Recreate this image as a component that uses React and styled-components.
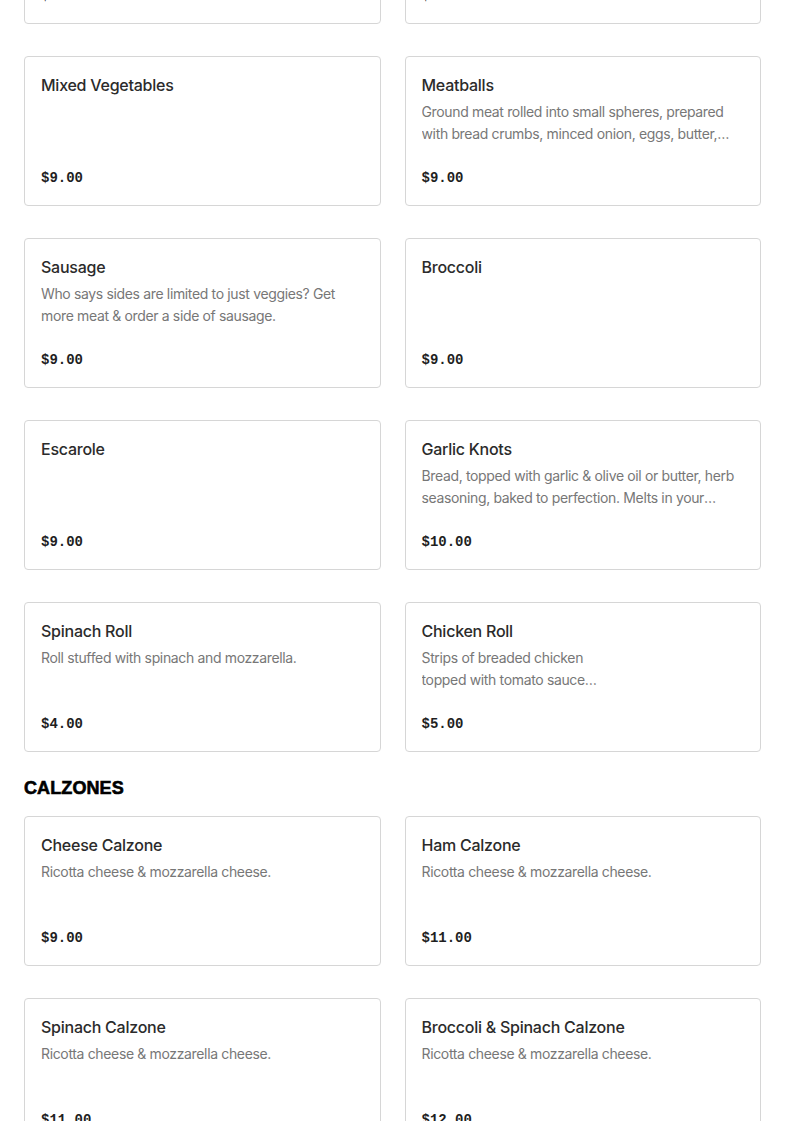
import styled, { createGlobalStyle } from "styled-components";

const GlobalStyle = createGlobalStyle`
	body {
		margin: 0;
		background: #ffffff;
		font-family: Inter, "Liberation Sans", sans-serif;
		color: #2d2d2d;
	}
`;

const sections = [
	{
		title: null,
		items: [
			{ name: "French Fries", desc: "", price: "$9.00" },
			{ name: "Onion Rings", desc: "", price: "$9.00" },
			{ name: "Mixed Vegetables", desc: "", price: "$9.00" },
			{
				name: "Meatballs",
				desc: "Ground meat rolled into small spheres, prepared with bread crumbs, minced onion, eggs, butter, and seasoning.",
				price: "$9.00",
			},
			{
				name: "Sausage",
				desc: "Who says sides are limited to just veggies? Get more meat & order a side of sausage.",
				price: "$9.00",
			},
			{ name: "Broccoli", desc: "", price: "$9.00" },
			{ name: "Escarole", desc: "", price: "$9.00" },
			{
				name: "Garlic Knots",
				desc: "Bread, topped with garlic & olive oil or butter, herb seasoning, baked to perfection. Melts in your mouth.",
				price: "$10.00",
			},
			{
				name: "Spinach Roll",
				desc: "Roll stuffed with spinach and mozzarella.",
				price: "$4.00",
			},
			{
				name: "Chicken Roll",
				desc: "Strips of breaded chicken\ntopped with tomato sauce\nand mozzarella.",
				price: "$5.00",
			},
		],
	},
	{
		title: "CALZONES",
		items: [
			{ name: "Cheese Calzone", desc: "Ricotta cheese & mozzarella cheese.", price: "$9.00" },
			{ name: "Ham Calzone", desc: "Ricotta cheese & mozzarella cheese.", price: "$11.00" },
			{ name: "Spinach Calzone", desc: "Ricotta cheese & mozzarella cheese.", price: "$11.00" },
			{
				name: "Broccoli & Spinach Calzone",
				desc: "Ricotta cheese & mozzarella cheese.",
				price: "$12.00",
			},
		],
	},
];

const App = () => {
	return (
		<>
			<GlobalStyle />
			<Page>
				{sections.map((section, i) => (
					<Section key={i}>
						{section.title && <SectionTitle>{section.title}</SectionTitle>}
						<Grid>
							{section.items.map((item) => (
								<Card key={item.name}>
									<ItemName>{item.name}</ItemName>
									{item.desc && <ItemDesc>{item.desc}</ItemDesc>}
									<Price>{item.price}</Price>
								</Card>
							))}
						</Grid>
					</Section>
				))}
			</Page>
		</>
	);
};

const Page = styled.main`
	display: flex;
	flex-direction: column;
	padding: 0 24px 40px;
	margin-top: -126px;
`;

const Section = styled.section`
	display: flex;
	flex-direction: column;
`;

const SectionTitle = styled.h2`
	margin: 24px 0 16px;
	font-family: "Liberation Sans", Arial, sans-serif;
	font-size: 18px;
	line-height: 24px;
	font-weight: 700;
	letter-spacing: 0.1px;
	-webkit-text-stroke: 0.6px #000000;
	color: #000000;
`;

const Grid = styled.div`
	display: grid;
	grid-template-columns: 1fr 1fr;
	column-gap: 24px;
	row-gap: 32px;
`;

const Card = styled.div`
	box-sizing: border-box;
	display: flex;
	flex-direction: column;
	height: 150px;
	padding: 16px 16px 17px;
	border: 1px solid #d6d6d6;
	border-radius: 4px;
	background: #ffffff;
`;

const ItemName = styled.h3`
	margin: 0;
	font-size: 16px;
	line-height: 24px;
	font-weight: 500;
	letter-spacing: -0.25px;
	color: #2b2b2b;
`;

const ItemDesc = styled.p`
	margin: 4px 0 0;
	font-size: 14px;
	line-height: 22px;
	letter-spacing: -0.35px;
	color: #777777;
	white-space: pre-line;
	display: -webkit-box;
	-webkit-line-clamp: 2;
	-webkit-box-orient: vertical;
	overflow: hidden;
`;

const Price = styled.div`
	margin-top: auto;
	font-family: "Liberation Mono", "DejaVu Sans Mono", monospace;
	font-size: 14px;
	line-height: 20px;
	font-weight: 700;
	color: #1f1f1f;
`;

export default App;
